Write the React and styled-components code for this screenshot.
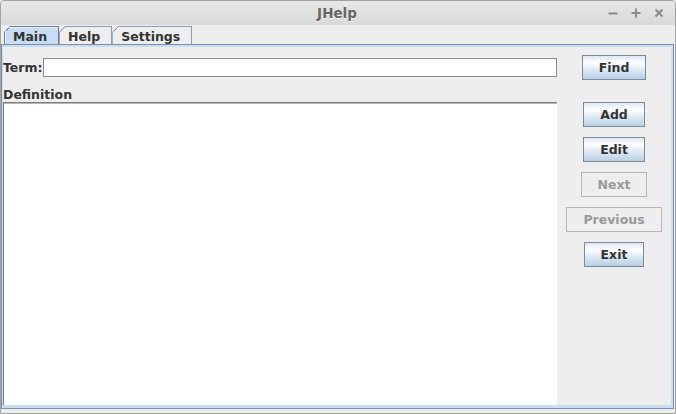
import React from "react";
import styled, { createGlobalStyle } from "styled-components";

const GlobalStyle = createGlobalStyle`
  html, body { margin: 0; padding: 0; background: #ededed; }
  body { font-family: "DejaVu Sans", "Liberation Sans", sans-serif; }
  * { box-sizing: border-box; }
`;

const Window = styled.div`
  width: 676px;
  height: 414px;
  display: flex;
  flex-direction: column;
  background: #ededed;
  border: 1px solid #a2a2a2;
  border-radius: 4px 4px 0 0;
  overflow: hidden;
`;

const TitleBar = styled.div`
  height: 24px;
  flex: none;
  display: grid;
  grid-template-columns: 1fr auto 1fr;
  align-items: center;
  background: linear-gradient(to bottom, #e8e8e8, #d9d9d9);
`;

const Title = styled.div`
  grid-column: 2;
  font-weight: bold;
  font-size: 13.5px;
  color: #666;
  text-shadow: 0 1px 0 rgba(255, 255, 255, 0.6);
  padding-right: 2px;
`;

const Controls = styled.div`
  grid-column: 3;
  justify-self: end;
  display: flex;
  align-items: center;
  gap: 13px;
  padding-right: 11px;
`;

const Body = styled.div`
  flex: 1;
  display: flex;
  flex-direction: column;
  padding: 0 1px 4px 0;
`;

const TabStrip = styled.div`
  height: 19px;
  flex: none;
  display: flex;
  align-items: flex-end;
  padding-left: 3px;
`;

const Tab = styled.div`
  height: 18px;
  display: flex;
  align-items: center;
  padding: 1px 11px 0 8px;
  font-size: 12.5px;
  font-weight: bold;
  color: #333;
  border: 1px solid ${(p) => (p.$selected ? "#6b7fa1" : "#8c9db6")};
  border-bottom: none;
  clip-path: polygon(6px 0, 100% 0, 100% 100%, 0 100%, 0 6px);
  background:
    linear-gradient(
        135deg,
        transparent 0,
        transparent 4.2px,
        ${(p) => (p.$selected ? "#6b7fa1" : "#8c9db6")} 4.2px,
        ${(p) => (p.$selected ? "#6b7fa1" : "#8c9db6")} 5.4px,
        transparent 5.4px
      )
      0 0 / 8px 8px no-repeat border-box,
    ${(p) => (p.$selected ? "#c8ddf2" : "#eeeeee")};
  box-shadow: ${(p) => (p.$selected ? "inset 1px 1px 0 #e4eefa" : "none")};
`;

const Panel = styled.div`
  flex: 1;
  display: flex;
  border: 1px solid #7e8fab;
  background: #c8ddf2;
  padding: 2px 2px 3px 1px;
`;

const Content = styled.div`
  flex: 1;
  display: flex;
  background: #eeeeee;
`;

const LeftCol = styled.div`
  width: 554px;
  display: flex;
  flex-direction: column;
`;

const TermRow = styled.div`
  height: 25px;
  margin-top: 8px;
  display: flex;
  align-items: center;
`;

const Label = styled.label`
  font-size: 12.5px;
  font-weight: bold;
  color: #333;
  line-height: 15px;
`;

const DefLabel = styled(Label)`
  display: block;
  margin-top: 7px;
  height: 15px;
`;

const Field = styled.input`
  flex: 1;
  min-width: 0;
  height: 19px;
  border: 1px solid #8a8f96;
  box-shadow: inset 1px 1px 0 #ffffff;
  background: #fff;
  outline: none;
  padding: 0 2px;
  font: 12px "DejaVu Sans", sans-serif;
`;

const DefArea = styled.textarea`
  flex: 1;
  resize: none;
  outline: none;
  background: #fff;
  border: none;
  border-top: 1px solid #7d7d7d;
  border-left: 1px solid #7d7d7d;
  box-shadow: inset 0 1px 0 #b5b5b5;
  margin: 0;
  padding: 2px;
  font: 12px "DejaVu Sans", sans-serif;
`;

const RightCol = styled.div`
  flex: 1;
  display: flex;
  flex-direction: column;
  align-items: center;
  padding-top: 8px;
  gap: 10px;
`;

const Button = styled.button`
  height: 25px;
  padding: 0 16px;
  margin-bottom: ${(p) => p.$after || 0}px;
  font-family: "DejaVu Sans", sans-serif;
  font-size: 12.5px;
  font-weight: bold;
  color: #333;
  border: 1px solid #7a8a99;
  border-radius: 0;
  background: linear-gradient(
    to bottom,
    #dde8f3 0%,
    #ffffff 30%,
    #dde8f3 60%,
    #b8cfe5 100%
  );
  cursor: pointer;

  &:disabled {
    color: #999999;
    border-color: #b5b5b5;
    background: #eeeeee;
    cursor: default;
  }
`;

const Icon = ({ children }) => (
  <svg width="10" height="10" viewBox="0 0 10 10" stroke="#8a8a8a" strokeWidth="2" fill="none">
    {children}
  </svg>
);

export default function App() {
  return (
    <>
      <GlobalStyle />
      <Window>
        <TitleBar>
          <Title>JHelp</Title>
          <Controls>
            <Icon>
              <path d="M0.5 5.5 H9.5" />
            </Icon>
            <Icon>
              <path d="M0.5 5 H9.5 M5 0.5 V9.5" />
            </Icon>
            <Icon>
              <path d="M1.5 1.5 L8.5 8.5 M8.5 1.5 L1.5 8.5" />
            </Icon>
          </Controls>
        </TitleBar>
        <Body>
          <TabStrip>
            <Tab $selected>Main</Tab>
            <Tab>Help</Tab>
            <Tab>Settings</Tab>
          </TabStrip>
          <Panel>
            <Content>
              <LeftCol>
                <TermRow>
                  <Label htmlFor="term">Term:</Label>
                  <Field id="term" />
                </TermRow>
                <DefLabel>Definition</DefLabel>
                <DefArea />
              </LeftCol>
              <RightCol>
                <Button $after={12}>Find</Button>
                <Button>Add</Button>
                <Button>Edit</Button>
                <Button disabled>Next</Button>
                <Button disabled>Previous</Button>
                <Button>Exit</Button>
              </RightCol>
            </Content>
          </Panel>
        </Body>
      </Window>
    </>
  );
}
